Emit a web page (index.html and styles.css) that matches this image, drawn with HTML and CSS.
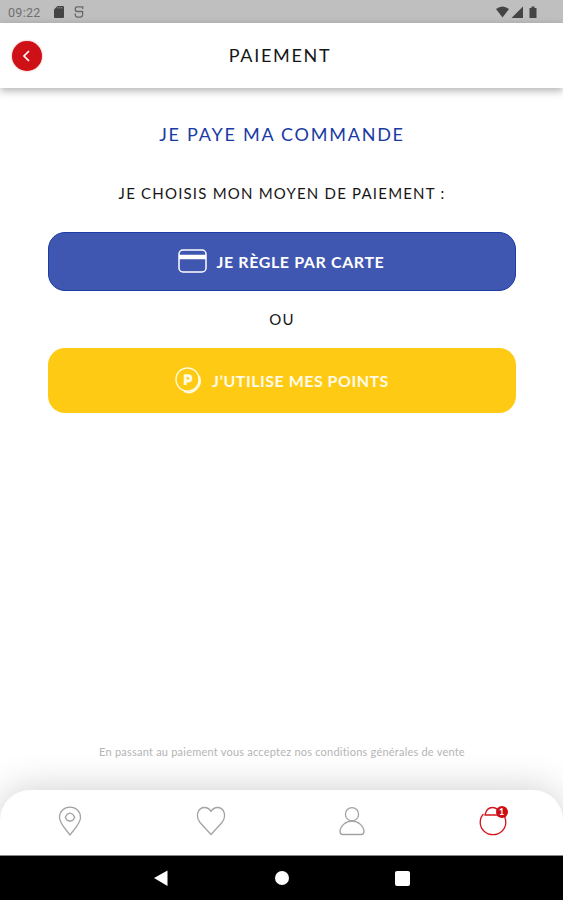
FILE: index.html
```html
<!DOCTYPE html>
<html lang="fr">
<head>
  <meta charset="UTF-8">
  <title>Paiement</title>
  <meta name="viewport" content="width=device-width, initial-scale=1.0">
  <link rel="stylesheet" href="styles.css">
</head>
<body>
  <div class="status-bar">
    <span class="time">09:22</span>
    <svg class="sd" width="10" height="12" viewBox="0 0 10 12"><path d="M3.500 0H9a1 1 0 0 1 1 1v10a1 1 0 0 1-1 1H1a1 1 0 0 1-1-1V3.500z" fill="#444"/><path d="M3.800 1v1.500M5.800 1v1.500M7.800 1v1.500" stroke="#999" stroke-width=".9"/></svg>
    <svg class="app" width="10" height="12" viewBox="0 0 10 12" fill="none" stroke="#686868" stroke-width="1.300"><path d="M8.700 3V.8H3.200Q1.300.8 1.300 2.700v1q0 1.800 1.900 1.800h5.400v3.200q0 2.400-2.400 2.400H3.800q-2.500 0-2.500-2.400V7.500"/></svg>
    <svg class="signals" width="42" height="13" viewBox="0 0 42 13" fill="#444"><path d="M0 3Q6.500-2 13 3L6.500 11.500z"/><path d="M27 .5v11.500H15.500z"/><path d="M33.500 2h2V.5h3V2h2v10h-7z"/></svg>
  </div>

  <header class="header">
    <button class="back" aria-label="Retour">
      <svg width="30" height="30" viewBox="0 0 30 30" fill="none" stroke="#fff" stroke-width="1.700"><path d="M17 10l-5 5 5 5"/></svg>
    </button>
    <h1>PAIEMENT</h1>
  </header>

  <main class="content">
    <h2>JE PAYE MA COMMANDE</h2>
    <p class="choice">JE CHOISIS MON MOYEN DE PAIEMENT :</p>
    <button class="pay card">
      <svg width="29" height="24" viewBox="0 0 29 24" fill="none" stroke="#fff" stroke-width="1.500"><rect x="1" y="1" width="27" height="22" rx="4"/><path d="M1 8h27" stroke-width="4.500"/></svg>
      <span>JE RÈGLE PAR CARTE</span>
    </button>
    <p class="or">OU</p>
    <button class="pay points">
      <svg width="27" height="27" viewBox="0 0 27 27" fill="none" stroke="#fffbe0" stroke-width="1.400"><circle cx="12.500" cy="12.500" r="11.500"/><path d="M24 9.500c4 8.500-6 19.500-15 14.700" stroke-width="2"/><path d="M10.200 18V8.800h3a2.600 2.600 0 0 1 0 5.200h-3" stroke-width="2.900"/></svg>
      <span>J’UTILISE MES POINTS</span>
    </button>
    <p class="terms">En passant au paiement vous acceptez nos conditions générales de vente</p>
  </main>

  <nav class="tabs">
    <a class="tab"><svg width="30" height="30" viewBox="0 0 30 30"><path d="M15 29C12.500 25 4.500 18 4.500 11.500 4.500 5 9 1.200 15 1.200S25.500 5 25.500 11.500C25.500 18 17.500 25 15 29z"/><path d="M15 7l3 1.500 1.700 2.800-1.700 2.900-3 1-3-1-1.700-2.900L12 8.500z"/></svg></a>
    <a class="tab"><svg width="30" height="30" viewBox="0 0 30 30"><path d="M15 28.500L4 16.500C-1 10 2 1.500 8.500 1.500c3 0 5 1.500 6.500 3.800C16.500 3 18.500 1.500 21.500 1.500 28 1.500 31 10 26 16.500z"/></svg></a>
    <a class="tab"><svg width="30" height="30" viewBox="0 0 30 30"><circle cx="15" cy="8.200" r="6.600"/><path d="M3 25.500C3 20.500 8.500 15 15 15S27 20.500 27 25.500q0 3-2.500 3h-19Q3 28.500 3 25.500z"/></svg></a>
    <a class="tab active"><svg width="30" height="30" viewBox="0 0 30 30"><path d="M7 9C8 4 10.500 1.500 14.500 1.500S21 4 22 9z"/><path d="M5.500 8A12.800 12.400 0 1 0 24.500 8"/></svg><span class="badge">1</span></a>
  </nav>

  <div class="system-bar">
    <svg width="16" height="18" viewBox="0 0 16 18"><path d="M1 9L14.500 1.500v15.500z" fill="#fff"/></svg>
    <span class="home"></span>
    <span class="recent"></span>
  </div>
</body>
</html>
```
FILE: styles.css
```css
* {
  box-sizing: border-box;
}

body {
  display: flex;
  flex-direction: column;
  height: 100vh;
  margin: 0;
  overflow: hidden;
  background: #fff;
  color: #161616;
  font-family: Lato, sans-serif;
}

h1, h2, p {
  margin: 0;
  font-weight: 400;
  text-align: center;
  white-space: nowrap;
}

svg {
  display: block;
  flex: none;
}

.status-bar {
  display: flex;
  align-items: center;
  flex: none;
  height: 23px;
  padding: 1px 25px 0 8px;
  background: #bfbfbf;
  color: #707070;
  font: 12.5px Roboto, sans-serif;
  letter-spacing: 0.3px;
}

.time {
  width: 46px;
}

.app {
  margin-left: 10px;
}

.signals {
  margin-left: auto;
}

.header {
  display: grid;
  grid-template-columns: 42px 1fr 42px;
  align-items: center;
  flex: none;
  height: 65px;
  background: #fff;
  box-shadow: 0 3px 8px rgba(0, 0, 0, 0.3);
}

.back {
  width: 30px;
  height: 30px;
  margin-left: 12px;
  padding: 0;
  border: none;
  border-radius: 50%;
  background: #ce1017;
  box-shadow: 0 0 2px rgba(206, 16, 23, 0.5);
}

h1 {
  padding: 0 3px 1px 0;
  font-size: 18px;
  letter-spacing: 1.7px;
}

.content {
  display: flex;
  flex-direction: column;
  flex: 1;
  padding: 33px 47px 0 48px;
}

h2 {
  height: 26px;
  color: #1a3aa5;
  font-size: 18px;
  line-height: 26px;
  letter-spacing: 1.75px;
}

.choice {
  height: 20px;
  margin-top: 36px;
  font-size: 15px;
  line-height: 20px;
  letter-spacing: 1.2px;
}

.pay {
  display: flex;
  align-items: center;
  justify-content: center;
  flex: none;
  gap: 10px;
  padding: 0;
  border: none;
  border-radius: 17px;
  color: #fff;
  font-family: inherit;
  font-size: 16px;
  font-weight: 700;
  letter-spacing: 0.5px;
  white-space: nowrap;
}

.card {
  height: 59px;
  margin-top: 29px;
  padding: 0 2px 1px 0;
  border: 1px solid #193ca5;
  background: #3f57b1;
  letter-spacing: 0.6px;
}

.or {
  height: 20px;
  margin: 18px 0 19px;
  font-size: 15px;
  line-height: 20px;
  letter-spacing: 1.2px;
}

.points {
  height: 65px;
  background: #ffca14;
  color: #fffbe8;
}

.terms {
  margin-top: auto;
  padding-bottom: 30px;
  color: #b5b5b5;
  font-size: 11px;
  line-height: 16px;
  letter-spacing: 0.22px;
}

.tabs {
  display: grid;
  grid-template-columns: repeat(4, 1fr);
  flex: none;
  height: 66px;
  padding-top: 16px;
  border-radius: 30px 30px 0 0;
  background: linear-gradient(#888, #888) bottom / 100% 1px no-repeat #fff;
  box-shadow: 0 0 38px rgba(0, 0, 0, 0.2);
}

.tab {
  position: relative;
  justify-self: center;
  width: 30px;
  height: 30px;
}

.tab svg {
  fill: none;
  stroke: #a3a3a3;
  stroke-width: 1.3;
}

.active svg {
  stroke: #d2141d;
}

.badge {
  position: absolute;
  top: 0;
  right: 0;
  width: 12px;
  height: 12px;
  border-radius: 50%;
  background: #cf0c14;
  color: #fff;
  font-size: 9px;
  font-weight: 700;
  line-height: 12px;
  text-align: center;
}

.system-bar {
  display: flex;
  align-items: center;
  justify-content: center;
  flex: none;
  gap: 106px;
  height: 44px;
  background: #000;
  z-index: 1;
}

.home {
  width: 14px;
  height: 14px;
  border-radius: 50%;
  background: #fff;
}

.recent {
  width: 15px;
  height: 15px;
  border-radius: 2px;
  background: #fff;
}
```
